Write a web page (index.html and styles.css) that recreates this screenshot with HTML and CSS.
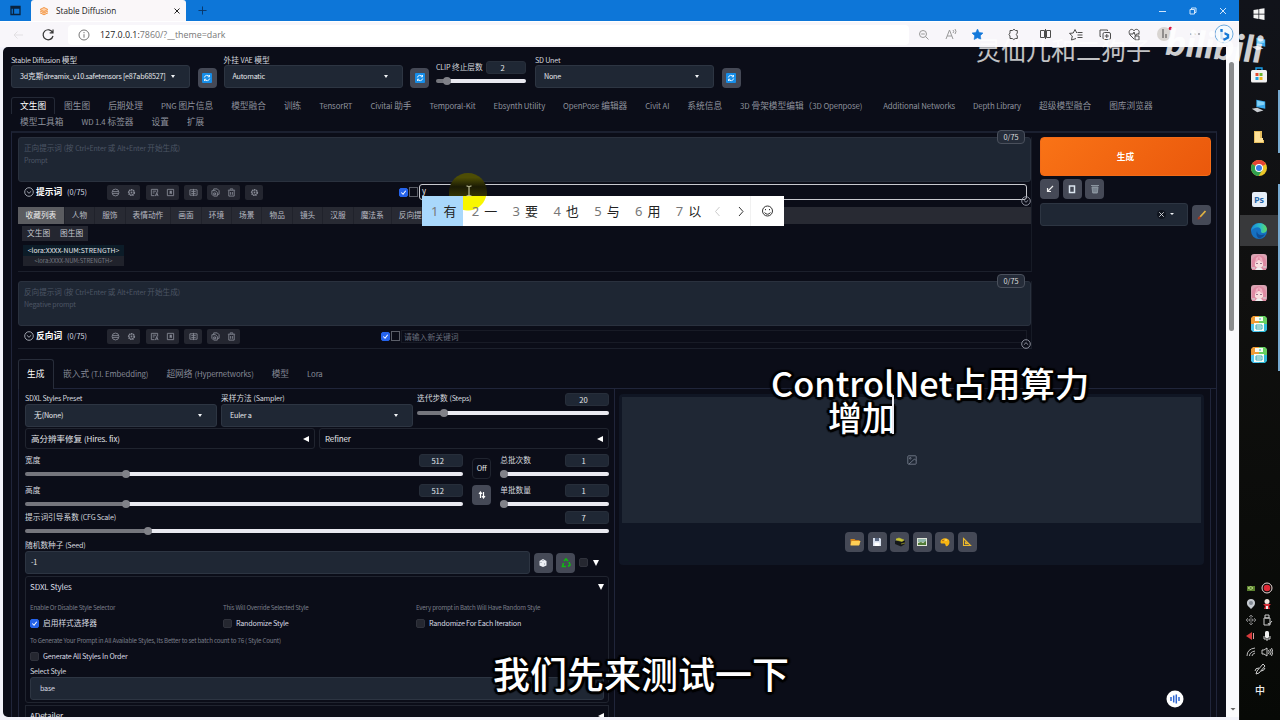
FILE: index.html
```html
<!DOCTYPE html>
<html lang="zh-CN">
<head>
<meta charset="utf-8">
<title>Stable Diffusion</title>
<link rel="stylesheet" href="styles.css">
</head>
<body>
<svg width="0" height="0" class="defs">
  <symbol id="reload" viewBox="0 0 12 12"><rect x="1" y="1" width="10" height="10" rx="1" fill="#168de8"/><path d="M3.3 5.5a2.8 2.8 0 0 1 5-1M8.7 6.5a2.8 2.8 0 0 1-5 1M8.5 3v1.8H6.7M3.5 9V7.2h1.8" fill="none" stroke="#e8f6ff"/></symbol>
  <symbol id="globe" viewBox="0 0 10 10"><g fill="none" stroke="currentColor"><circle cx="5" cy="5" r="3.8"/><path d="M1.5 4h7M1.5 6h7"/></g></symbol>
  <symbol id="gear" viewBox="0 0 10 10"><circle cx="5" cy="5" r="3" fill="none" stroke="currentColor" stroke-width="2" stroke-dasharray="1.6 .6"/><circle cx="5" cy="5" r="1" fill="currentColor"/></symbol>
  <symbol id="doc" viewBox="0 0 10 10"><path d="M5 8.5H1.5v-7h7V5M3 3.5h4M3 5.5h2M6 9l1.5-4L9 9M6.5 7.7h2" fill="none" stroke="currentColor"/></symbol>
  <symbol id="mark" viewBox="0 0 10 10"><path d="M1.5 1.5h7v7h-7z" fill="none" stroke="currentColor"/><path d="M4 3h2.5v4L5.2 6 4 7z" fill="currentColor"/></symbol>
  <symbol id="trans" viewBox="0 0 10 10"><path d="M1 2h8v6H1zM5 1v8M2.5 4h5M2.5 6h5" fill="none" stroke="currentColor"/></symbol>
  <symbol id="copy" viewBox="0 0 10 10"><path d="M3 3V1h4l2 2v4H7M1 3h4l2 2v4H3L1 7zM3 5.5h2v2H3z" fill="none" stroke="currentColor"/></symbol>
  <symbol id="trash" viewBox="0 0 10 10"><path d="M1 2.5h8M3.5 2V1h3v1M2 3v6h6V3M4 4.5v3M6 4.5v3" fill="none" stroke="currentColor"/></symbol>
  <symbol id="circdown" viewBox="0 0 10 10"><g fill="none" stroke="currentColor" stroke-width=".9"><circle cx="5" cy="5" r="4.3"/><path d="M2.8 4.2 5 6.3l2.2-2.1"/></g></symbol>
  <symbol id="pc" viewBox="0 0 18 16"><path d="m6 1 10 2v8L6 9z" fill="#39a8ea"/><path d="m7 2 8 1.7v3L7 8z" fill="#83d2f7"/><path d="m1 11 6-1 7 3-7 2z" fill="#c8ccd0"/></symbol>
  <symbol id="girl" viewBox="0 0 16 16"><rect width="16" height="16" rx="3" fill="#d9a3b2"/><path d="M1 16V8C1-1 15-1 15 8v8z" fill="#df8ba3"/><path d="M4 8q4-4 8 0v4q-4 4-8 0z" fill="#f8dedd"/><path d="M8 2 6 8 4 9 5 4zM8 2l1 5 3 2-1-5z" fill="#eeb0c0"/><path d="M5.200 9.500h1.600M9.200 9.500h1.600" stroke="#7f5a78"/><path d="m4 16 2-2.500h4l2 2.500z" fill="#eef0f0"/><path d="M1 14h3M12 13h3" stroke="#cfe3df"/></symbol>
  <symbol id="disk" viewBox="0 0 16 16"><path d="M0 2 2 0h6v8H0z" fill="#ee9c36"/><path d="M8 0h6l2 2v6H8z" fill="#65cf60"/><path d="M0 8h8v8H2l-2-2z" fill="#4bc5ee"/><path d="M8 8h8v6l-2 2H8z" fill="#2fbad7"/><path d="M4 1h8v4H4zM3 7h10v8H3z" fill="#f6fbf4"/><path d="M9 2v2M5 9h6v4H5zM5 11h5" fill="none" stroke="#3aabb4"/></symbol>
</svg>

<div class="desktop">
  <main class="browser">
    <div class="titlebar">
      <svg class="work" viewBox="0 0 11 11"><path d="M1 1.5h9v8H1zM1 3h9M3.5 3v6" fill="none" stroke="#09233f" stroke-width="1.3"/></svg>
      <div class="btab"><svg viewBox="0 0 10 10"><path d="m1 3.5 4-2 4 2-4 2zM1 5l4 2 4-2M1 6.8l4 2 4-2" fill="#ffd0a8" stroke="#f39a4b"/></svg><span>Stable Diffusion</span><svg class="x" viewBox="0 0 8 8"><path d="m1.5 1.5 5 5m0-5-5 5" stroke="#222"/></svg></div>
      <svg class="plus" viewBox="0 0 10 10"><path d="M5 .5v9M.5 5h9" stroke="#0a3464"/></svg>
      <svg class="winctl" viewBox="0 0 70 12"><g fill="none" stroke="#cfe5fb"><path d="M1 6.5h7M62 3l6 6m0-6-6 6M32 4.5h4.5V9H32zM33.5 4.500V3H38v4.500h-1.500"/></g></svg>
    </div>
    <div class="toolbar">
      <svg class="nav" viewBox="0 0 60 20"><path d="M14 10h9M17.500 6.500 14 10l3.500 3.500" fill="none" stroke="#e2e0e3"/><path d="M52.600 7.500a5 5 0 1 0 .4 3.500M53 4.500v3.300h-3.300" fill="none" stroke="#333" stroke-width="1.200"/></svg>
      <div class="addr">
        <svg viewBox="0 0 12 12"><g fill="none" stroke="#777"><circle cx="6" cy="6" r="5"/><path d="M6 5.200v3.500M6 3v1.200"/></g></svg>
        <span class="url"><b>127.0.0.1:</b>7860/?__theme=dark</span>
      </div>
      <svg class="tools" viewBox="0 0 330 24"><g fill="none" stroke="#4c4c4c">
        <g stroke="#999"><circle cx="14" cy="11" r="3.500"/><path d="m16.500 13.500 3 3M12.200 11h3.600"/><path d="m37 16 3.500-9 3.500 9M38.200 13h4.500M44 7q1.500 1.500 0 3M46 6q2 2.500 0 5"/></g>
        <path d="m68.500 6 1.700 3.500 3.800.5-2.700 2.700.6 3.800-3.400-1.800-3.400 1.800.6-3.800L63 10l3.800-.5z" fill="#1479da" stroke="#1479da" stroke-width=".6"/>
        <path d="M101 7.500h2.500q1.500-2.500 3 0h1.800v2.500q-2 1.500 0 3v2.500h-2q-1.500 2-3 0H101v-2.500q-2-1.500 0-3z"/>
        <path d="M131.500 7.500h4v7h-4zM137.500 7.500h4v7h-4zM136.500 6v10"/>
        <path d="m167 15.500-4.500 1.500.8-4-2.800-2.600 3.700-.4 1.800-3.500 1.800 3.500M168.500 9.500h5M168.500 12h5M168.500 14.500h5"/>
        <rect x="194" y="9.500" width="7.500" height="7" rx="1.500"/><path d="M192 13.500h-1V7h7.500v1M197.800 11v4M195.800 13h4"/>
        <path d="m225 16-4-4c-3-5 2.500-7.500 4-4 1.500-3.500 7-1 4.500 3M221 11h3l1-2 1.500 4 1-2h3M226 13h4v4h-4z"/>
      </g><circle cx="255" cy="11" r="7" fill="#d9d5d2"/><path d="M254 6v9M257 11v4" stroke="#918e8d" stroke-width="2"/><circle cx="261.500" cy="5.500" r="1.800" fill="#d90d28"/><g fill="#555"><circle cx="282" cy="11" r=".8"/><circle cx="286" cy="11" r=".8"/><circle cx="290" cy="11" r=".8"/></g><circle cx="315" cy="11" r="9" fill="#f5fafe" stroke="#6daade"/><path d="M312.500 6v9l3 1.500 3.500-2v-2.500l-4-2" fill="none" stroke="#147ad7" stroke-width="2.400"/></svg>
    </div>
    <div class="viewport">
      <div class="page">
        <div class="quick">
          <div class="field"><label><small>Stable Diffusion</small> 模型</label><div class="select"><span><small>3d</small>克斯<small>dreamix_v10.safetensors [e87ab68527]</small></span><i></i></div></div>
          <div class="sq"><svg><use href="#reload"/></svg></div>
          <div class="field"><label>外挂 <small>VAE</small> 模型</label><div class="select"><small>Automatic</small><i></i></div></div>
          <div class="sq"><svg><use href="#reload"/></svg></div>
          <div class="slider clip"><div class="head"><label><small>CLIP</small> 终止层数</label><b>2</b></div><div class="track" style="--v:13%"></div></div>
          <div class="field"><label><small>SD Unet</small></label><div class="select"><small>None</small><i></i></div></div>
          <div class="sq"><svg><use href="#reload"/></svg></div>
        </div>
        <nav class="tabs">
          <span class="on">文生图</span><span>图生图</span><span>后期处理</span><span><small>PNG</small> 图片信息</span><span>模型融合</span><span>训练</span><span><small>TensorRT</small></span><span><small>Civitai</small> 助手</span><span><small>Temporal-Kit</small></span><span><small>Ebsynth Utility</small></span><span><small>OpenPose</small> 编辑器</span><span><small>Civit AI</small></span><span>系统信息</span><span><small>3D</small> 骨架模型编辑（<small>3D Openpose)</small></span><span class="addn"><small>Additional Networks</small></span><span><small>Depth Library</small></span><span>超级模型融合</span><span>图库浏览器</span>
        </nav>
        <nav class="tabs second"><span>模型工具箱</span><span><small>WD 1.4</small> 标签器</span><span>设置</span><span>扩展</span></nav>
        <section class="panel">
          <div class="top">
            <div class="prompts">
              <div class="pbox">
                <div class="area">正向提示词 <small>(</small>按 <small>Ctrl+Enter</small> 或 <small>Alt+Enter</small> 开始生成<small>)</small><br><small>Prompt</small><em class="count">0/75</em></div>
                <div class="ptools">
                  <svg class="cd"><use href="#circdown"/></svg><strong>提示词</strong><span class="tok">(0/75)</span>
                  <div class="grp"><svg><use href="#globe"/></svg><svg><use href="#gear"/></svg></div>
                  <div class="grp"><svg><use href="#doc"/></svg><svg><use href="#mark"/></svg></div>
                  <div class="grp one"><svg><use href="#trans"/></svg></div>
                  <div class="grp"><svg><use href="#copy"/></svg><svg><use href="#trash"/></svg></div>
                  <div class="grp one"><svg><use href="#gear"/></svg></div>
                  <div class="kw first"><i class="chk on"></i><i class="brk"></i><div class="kin">y</div></div>
                  <svg class="fold"><use href="#circdown"/></svg>
                </div>
                <div class="cats"><span class="on">收藏列表</span><span>人物</span><span>服饰</span><span>表情动作</span><span>画面</span><span>环境</span><span>场景</span><span>物品</span><span>镜头</span><span>汉服</span><span>魔法系</span><span>反向提</span></div>
                <div class="subs"><span>文生图</span><span>图生图</span></div>
                <div class="lora"><div>&lt;lora:XXXX-NUM:STRENGTH&gt;</div><div>&lt;lora:XXXX-NUM:STRENGTH&gt;</div></div>
              </div>
              <div class="pbox neg">
                <div class="area">反向提示词 <small>(</small>按 <small>Ctrl+Enter</small> 或 <small>Alt+Enter</small> 开始生成<small>)</small><br><small>Negative prompt</small><em class="count">0/75</em></div>
                <div class="ptools">
                  <svg class="cd"><use href="#circdown"/></svg><strong>反向词</strong><span class="tok">(0/75)</span>
                  <div class="grp"><svg><use href="#globe"/></svg><svg><use href="#gear"/></svg></div>
                  <div class="grp"><svg><use href="#doc"/></svg><svg><use href="#mark"/></svg></div>
                  <div class="grp one"><svg><use href="#trans"/></svg></div>
                  <div class="grp"><svg><use href="#copy"/></svg><svg><use href="#trash"/></svg></div>
                  <div class="kw"><i class="chk on"></i><i class="brk"></i><div class="kin">请输入新关键词</div></div>
                  <svg class="fold up"><use href="#circdown"/></svg>
                </div>
              </div>
            </div>
            <aside class="gen">
              <button class="go">生成</button>
              <div class="minis">
                <div class="sq"><svg viewBox="0 0 12 12"><path d="M9 3 4 8M3.500 5v3.500H7" fill="none" stroke="#eee" stroke-width="1.200"/></svg></div>
                <div class="sq"><svg viewBox="0 0 12 12"><path d="M3.500 3h5v6.500h-5z" fill="none" stroke="#dbe5ef" stroke-width="1.500"/></svg></div>
                <div class="sq"><svg viewBox="0 0 12 12"><path d="M2 2.500h8M3 4h6l-.7 6H3.700z" fill="#8a949e" stroke="#8a949e"/><path d="M5 5v4M7 5v4" stroke="#69727e"/></svg></div>
              </div>
              <div class="style"><div class="select"><u><svg viewBox="0 0 8 8"><path d="m2 2 4 4m0-4L2 6" stroke="#d7dbe1" stroke-width=".8"/></svg></u><i></i></div><div class="sq"><svg viewBox="0 0 12 12"><path d="m4 8 5.500-6" stroke="#e0b343" stroke-width="1.800"/><path d="M1.500 10.500q0-3 2-3.300l1.500 1Q4 11 1.500 10.500" fill="#a63d23"/></svg></div></div>
            </aside>
          </div>
          <nav class="gtabs"><span class="on">生成</span><span>嵌入式 <small>(T.I. Embedding)</small></span><span>超网络 <small>(Hypernetworks)</small></span><span>模型</span><span><small>Lora</small></span></nav>
          <div class="work2">
            <div class="settings">
              <div class="r1">
                <div class="field"><label><small>SDXL Styles Preset</small></label><div class="select"><span>无<small>(None)</small></span><i></i></div></div>
                <div class="field"><label>采样方法 <small>(Sampler)</small></label><div class="select"><small>Euler a</small><i></i></div></div>
                <div class="slider"><div class="head"><label>迭代步数 <small>(Steps)</small></label><b>20</b></div><div class="track" style="--v:14.500%"></div></div>
              </div>
              <div class="r2"><div><span>高分辨率修复 <small>(Hires. fix)</small></span><i class="tri"></i></div><div><small>Refiner</small><i class="tri"></i></div></div>
              <div class="r3">
                <div class="dims"><div class="slider"><div class="head"><label>宽度</label><b>512</b></div><div class="track" style="--v:23.200%"></div></div>
                <div class="slider"><div class="head"><label>高度</label><b>512</b></div><div class="track" style="--v:23.200%"></div></div></div>
                <div class="btns"><div class="off">Off</div><div class="sq"><svg viewBox="0 0 12 12"><path d="M4.500 9V3.500M3 5l1.500-2L6 5M7.500 3v5.500M6 7l1.500 2L9 7" fill="none" stroke="#fff" stroke-width="1.200"/></svg></div></div>
                <div class="batch"><div class="slider"><div class="head"><label>总批次数</label><b>1</b></div><div class="track" style="--v:4%"></div></div>
                <div class="slider"><div class="head"><label>单批数量</label><b>1</b></div><div class="track" style="--v:4%"></div></div></div>
              </div>
              <div class="slider cfg"><div class="head"><label>提示词引导系数 <small>(CFG Scale)</small></label><b>7</b></div><div class="track" style="--v:21.200%"></div></div>
              <div class="seed"><div class="field"><label>随机数种子 <small>(Seed)</small></label><div class="select"><small>-1</small></div></div>
                <div class="sq"><svg viewBox="0 0 12 12"><path d="m6 2 3.500 2v4.500L6 10 2.500 8.500V4z" fill="#eceef3"/><path d="M4 5v1M7.500 6.500v1M6 3v1" stroke="#8b929f"/></svg></div>
                <div class="sq"><svg viewBox="0 0 12 12"><path d="m4 4 2-2 2 2M9 5l1 3-2 1.500M6 9.500H2.500L3.500 6" fill="none" stroke="#13b515" stroke-width="1.700"/></svg></div>
                <i class="chk"></i><i class="tri down"></i></div>
              <div class="acc">
                <div class="acch"><small>SDXL Styles</small><i class="tri down"></i></div>
                <div class="three"><div><p>Enable Or Disable Style Selector</p><span><i class="chk on"></i>启用样式选择器</span></div><div><p>This Will Override Selected Style</p><span><i class="chk"></i><small>Randomize Style</small></span></div><div><p>Every prompt in Batch Will Have Random Style</p><span><i class="chk"></i><small>Randomize For Each Iteration</small></span></div></div>
                <div class="allst"><p>To Generate Your Prompt in All Available Styles, Its Better to set batch count to 76 ( Style Count)</p><span><i class="chk"></i><small>Generate All Styles In Order</small></span></div>
                <label><small>Select Style</small></label><div class="select"><small>base</small></div>
              </div>
              <div class="acc2"><div class="acch"><small>ADetailer</small><i class="tri"></i></div></div>
            </div>
            <div class="result">
              <div class="output">
                <div class="canvas"><svg viewBox="0 0 10 10"><g fill="none" stroke="#7d8796" stroke-width=".8"><rect x=".8" y=".8" width="8.400" height="8.400" rx=".8"/><circle cx="3.300" cy="3.300" r=".8"/><path d="m2 9 5.500-5L9 5.500"/></g></svg></div>
                <div class="acts">
                  <div class="sq"><svg viewBox="0 0 12 12"><path d="M1.500 3h4l1 1h4v5h-9z" fill="#d4861c"/><path d="M2.500 5h9L10 9.500H1.500z" fill="#ffcf55"/></svg></div>
                  <div class="sq"><svg viewBox="0 0 12 12"><path d="M2 2h7l1 1v7H2z" fill="#d9e1ef"/><path d="M4 2h4v3H4z" fill="#5c6a84"/><path d="M3.500 6.500h5V10h-5z" fill="#fff"/></svg></div>
                  <div class="sq"><svg viewBox="0 0 12 12"><path d="m1 5 6-2 4 2v3L7 10.500 1 8z" fill="#15181a"/><path d="m2 3 3-1 5 2-2 1.500-6-1.500M7 8l4-1" fill="#cac632" stroke="#bebc38" stroke-width=".6"/></svg></div>
                  <div class="sq"><svg viewBox="0 0 12 12"><path d="M1 2h10v8H1z" fill="#e0e6da"/><path d="M2 3h8v3H2z" fill="#91b6aa"/><path d="M2 9V7l3-1 2 1 3-2v4z" fill="#507a36"/></svg></div>
                  <div class="sq"><svg viewBox="0 0 12 12"><path d="M1.500 6c0-5 9-5 9 0 0 2-1.500 4.500-3 4.200C6 10 7 7.500 5 7.500S1.500 8 1.500 6" fill="#f7b512"/><circle cx="4" cy="4.500" r=".8" fill="#a85d19"/><circle cx="7" cy="4" r=".8" fill="#fff0a0"/></svg></div>
                  <div class="sq"><svg viewBox="0 0 12 12"><path d="m2.500 2.500 7 7h-7zM4.500 6.500v1.300h1.500z" fill="none" stroke="#edba2c" stroke-width="1.100"/></svg></div>
                </div>
              </div>
            </div>
          </div>
        </section>
      </div>
      <div class="scroll"><div class="thumb"></div><svg viewBox="0 0 8 8"><path d="M1.500 3h5L4 5.500z" fill="#666"/></svg></div>
    </div>
  </main>
  <aside class="taskbar">
    <div class="app"><svg viewBox="0 0 16 16"><path d="m2.500 4 5-.8v4.500h-5zM8.200 3l5.300-.8v5.500H8.200zM2.500 8.400h5v4.500l-5-.8zM8.200 8.400h5.300v5.500L8.200 13z" fill="#f4f4f4"/></svg></div>
    <div class="app"><svg><use href="#pc"/></svg></div>
    <div class="app"><svg viewBox="0 0 16 16"><path d="M5 4V1h6v3" fill="none" stroke="#199fe9" stroke-width="1.400"/><rect y="3" width="16" height="12.500" rx="1.500" fill="#f2f2f2"/><path d="M4.500 6h3v3h-3z" fill="#e3492c"/><path d="M8.500 6h3v3h-3z" fill="#6bb52e"/><path d="M4.500 10h3v3h-3z" fill="#219fd9"/><path d="M8.500 10h3v3h-3z" fill="#f0b61c"/></svg></div>
    <div class="app run"><svg><use href="#pc"/></svg></div>
    <div class="app run"><svg viewBox="0 0 16 16"><path d="M3 2h8v9h2v3H3z" fill="#e6be5e"/><path d="M4 3h5v10H4zM9 9h3v4H9z" fill="#ffe298"/></svg></div>
    <div class="app"><svg viewBox="0 0 16 16"><circle cx="8" cy="8" r="8" fill="#ebc528"/><path d="M8 8 1.100 4A8 8 0 0 1 15 4z" fill="#e54335"/><path d="M8 8 1.100 4A8 8 0 0 0 7.500 16l4-6z" fill="#30a04e"/><circle cx="8" cy="8" r="4" fill="#fff"/><circle cx="8" cy="8" r="3" fill="#397bea"/></svg></div>
    <div class="app run"><div class="ps">Ps</div></div>
    <div class="app run cur"><svg viewBox="0 0 16 16"><defs><linearGradient id="eg" x2="1"><stop stop-color="#1687dc"/><stop offset=".6" stop-color="#2fc0c0"/><stop offset="1" stop-color="#60db60"/></linearGradient></defs><circle cx="8" cy="8" r="8" fill="#1671c2"/><path d="M0 8C1-2 15-2 16 6c0 5-7 5-6 2 0-5-6-5-10 0" fill="url(#eg)"/><path d="M6 8c0 4 4 5 8 3-1 2-3 4-6 4.500Q4 13 6 8" fill="#114d93"/></svg></div>
    <div class="app run"><svg><use href="#girl"/></svg></div>
    <div class="app run"><svg><use href="#girl"/></svg></div>
    <div class="app run"><svg><use href="#disk"/></svg></div>
    <div class="app run"><svg><use href="#disk"/></svg></div>
    <div class="tray">
      <svg viewBox="0 0 12 12"><path d="M2 4h8v5H2z" fill="#5a812e"/><path d="M3 6q3-3 5 0-2 3-5 0" fill="none" stroke="#b5d680"/></svg>
      <svg viewBox="0 0 12 12"><circle cx="6" cy="6" r="5" fill="none" stroke="#ecd8d8"/><circle cx="6" cy="6" r="3.300" fill="#e02936"/></svg>
      <svg viewBox="0 0 12 12"><path d="M6 1c5 0 5 6 2 8l-2 2-2-2C1 7 1 1 6 1" fill="#c6cbd0"/><circle cx="6" cy="5" r="2" fill="#858c95"/></svg>
      <svg viewBox="0 0 12 12"><circle cx="6" cy="3.500" r="2.500" fill="#f2e7df"/><path d="M2 6h8L8 8l1 3H3l1-3z" fill="#d92d37"/><path d="M5 8h2v3H5z" fill="#eee"/></svg>
      <svg viewBox="0 0 12 12"><path d="M6 1v3M6 8v3M1 6h3M8 6h3M4 3l2-2 2 2M4 9l2 2 2-2M3 4 1 6l2 2M9 4l2 2-2 2M4.500 5h3v2h-3z" fill="none" stroke="#777"/></svg>
      <svg viewBox="0 0 12 12"><path d="M4 1h4v3H4zM3 4h6v7H3z" fill="none" stroke="#ccc"/><path d="m7 9 1 1.500L11 7" fill="none" stroke="#ccc"/></svg>
      <svg viewBox="0 0 12 12"><path d="m1 6 6-4v8z" fill="#d73b3c"/><path d="M8.500 3v6" stroke="#d8a0a0"/></svg>
      <svg viewBox="0 0 12 12"><rect x="4" y="1" width="4" height="7" rx="1.500" fill="#eee"/><path d="M3 6v3h6V6M6 9v2" fill="none" stroke="#ccc"/></svg>
      <svg viewBox="0 0 12 12"><path d="M2 10Q2 3 10 2M4.500 10q0-4 5.500-5M7 10q0-2 3-3" fill="none" stroke="#bbb"/></svg>
      <svg viewBox="0 0 12 12"><path d="M1 4h2l3-2v8L3 8H1zM7.500 4q1.500 2 0 4M9 3q2.500 3 0 6M10.500 2q3 4 0 8" fill="none" stroke="#ddd" stroke-width=".9"/></svg>
    </div>
    <svg class="pen" viewBox="0 0 12 12"><path d="m3 8 6-7 2 2-6 7-3 1zM1 8q0-3 4-3M7 8q3 0 4-3" fill="none" stroke="#ccc"/></svg>
    <div class="ime">中</div>
  </aside>
</div>

<div class="halo"></div>
<div class="cand"><span class="sel"><b>1</b>有</span><span><b>2</b>一</span><span><b>3</b>要</span><span><b>4</b>也</span><span><b>5</b>与</span><span><b>6</b>用</span><span><b>7</b>以</span><svg viewBox="0 0 98 30"><g fill="none" stroke="#333"><path d="m15.500 11-4 4.500 4 4.500" stroke="#ccc"/><path d="m35 11 4 4.500-4 4.500"/><path d="M46.500 0v30" stroke="#f1f1f1"/><circle cx="63.500" cy="15" r="5"/><path d="M60.500 16.500q3 3.500 6 0M61.500 13v1.200M65.500 13v1.200"/></g></svg></div>
<svg class="ibeam" viewBox="0 0 8 12"><path d="M1.500 1q2.500 0 2.500 1 0-1 2.500-1M4 2v8M1.500 11Q4 11 4 10q0 1 2.500 1" fill="none" stroke="#d8d8b0"/></svg>
<div class="wm">灵仙儿和二狗子</div>
<div class="wmlogo">bilibili</div>
<div class="cap c1">ControlNet占用算力</div>
<div class="cap c2">增加</div>
<div class="beam"></div>
<div class="cap c3">我们先来测试一下</div>
<svg class="voice" viewBox="0 0 18 18"><circle cx="9" cy="9" r="8.500" fill="#fff"/><path d="M5 7v4M7.700 5.500v7M10.300 4.500v9M13 7v4" stroke="#2c64d0" stroke-width="1.500"/></svg>
</body>
</html>
```
FILE: styles.css
```css
*{box-sizing:border-box}
body{margin:0;width:1280px;height:720px;overflow:hidden;position:relative;background:#f2f2f8;color:#e5e7eb;font:8.700px/12px "Noto Sans CJK SC",sans-serif}
svg{display:block;flex:none}
i,em{font-style:normal}
p{margin:0}
small{font-size:7.200px;letter-spacing:-.230px}
.defs{position:absolute}
.desktop{display:flex;height:720px}
.browser{width:1239px;flex:none;background:#f2f2fa;display:flex;flex-direction:column}
.titlebar{height:21px;flex:none;background:#0d76d8;display:flex;align-items:center}
.work{width:11px;height:11px;margin:0 15px 0 10px}
.btab{width:155px;height:21px;background:#faf7f9;border-radius:3px 3px 0 0;display:flex;align-items:center;color:#222;font:8.200px/20px "Open Sans",sans-serif;padding:0 5px 0 8px;margin-left:-5px}
.btab svg{width:10px;height:10px;margin-right:7px}
.btab .x{width:8px;height:8px;margin:0 0 0 auto}
.plus{width:9px;height:9px;margin-left:12px}
.winctl{width:70px;height:12px;margin-left:auto;margin-right:11px}
.toolbar{height:26px;flex:none;display:flex;align-items:center;background:#f8f6fa;border-top:1px solid #fff}
.nav{width:60px;height:20px;margin-right:8px}
.addr{height:20px;flex:1;background:#fff;border-radius:4px;display:flex;align-items:center;padding-left:10px;color:#777;font:8.900px/20px "Open Sans",sans-serif}
.addr svg{width:12px;height:12px;margin-right:10px}
.addr b{font-weight:400;color:#222}
.tools{width:330px;height:24px}
.viewport{height:670px;display:flex;padding-left:3px}
.page{width:1223px;height:670px;overflow:hidden;background:#0b0d18;border-radius:5px 0 0 5px;padding-left:8px}
.scroll{width:13px;background:#fafafd;display:flex;flex-direction:column;align-items:center}
.thumb{width:5px;height:269px;margin:15px 2px 0 0;background:#8b8c8e;border-radius:3px}
.scroll svg{width:8px;height:8px;margin-top:auto;margin-bottom:4px}

.quick{height:41px;display:flex;align-items:flex-start;padding-top:7px}
.field label,.slider label,.acc label{display:block;font-size:7.700px;line-height:12px;height:12px;color:#d5d8df;white-space:nowrap}
.select{height:23px;background:#1f2734;border:1px solid #2d3542;border-radius:3px;display:flex;align-items:center;padding:0 14px 1px 8px;font-size:7.700px;white-space:nowrap}
.select i{width:0;height:0;border:2.500px solid transparent;border-top:3px solid #f2f4f7;border-bottom:0;margin-left:auto}
.quick .field{width:179px}
.quick .select{margin-top:-1px}
.sq{width:19px;height:20px;flex:none;border-radius:4px;background:#454956;display:flex;align-items:center;justify-content:center}
.sq svg{width:12px;height:12px}
.quick .sq{margin:14px 7px 0 7.500px}
.quick .clip+.field{margin-left:9px}
.head{display:flex;justify-content:space-between}
.head b{width:44px;height:13px;background:#1f2734;border:1px solid #272e3a;border-radius:3px;text-align:center;font-weight:400;font-size:7.600px;line-height:11px;padding-right:7px}
.track{height:4px;border-radius:2px;background:linear-gradient(90deg,#75767d var(--v),#e9e9f0 var(--v));position:relative;margin-top:4px}
.track::after{content:"";position:absolute;width:8px;height:8px;border-radius:4px;background:#808188;top:-2px;left:calc(var(--v) - 5px)}
.quick .clip{width:90px;padding-top:7px}
.clip .head b{width:40px}
.clip .head{height:14px}

.tabs{display:flex;height:25px;padding:9px 0 0 0;font-size:8.700px;line-height:17px;color:#8e929d;white-space:nowrap}
.tabs span{padding:0 9px;height:17px}
.tabs small,.gtabs small{font-size:7.800px;letter-spacing:-.120px}
.tabs .on{color:#fff;border:1px solid #242936;border-bottom:0;border-radius:3px 3px 0 0;padding:0 8px;line-height:16px}
.tabs .addn{margin-left:3px}
.tabs.second{height:18px;padding-top:0}
.panel{width:1206px;height:600px;border:1px solid #20253a;border-top:2px solid #1b2030;padding-left:6px}
.top{display:flex;height:222px}
.prompts{width:1014px;padding-top:4px}
.area{height:45px;background:#1e2633;border:1px solid #2a313e;border-radius:3px;color:#4c5564;font-size:7.600px;line-height:11px;padding:4px 5px;position:relative}
.area small{font-size:7px;letter-spacing:-.200px}
.count{position:absolute;right:5px;top:-8px;width:28px;height:14px;background:#252c39;border:1px solid #4a505c;border-radius:4px;color:#ddd;text-align:center;font-size:7.300px;line-height:12px}
.pbox{height:135px;border-right:1px solid #171b26;border-bottom:1px solid #1c202c}
.neg{margin-top:9px;height:68px}
.ptools{height:20px;display:flex;align-items:center;padding-left:6px;position:relative}
.cd{width:10px;height:10px;color:#aeb2bc}
.ptools strong{width:27px;margin-left:2px;font-size:8.700px;color:#fff}
.tok{width:38px;font-size:7.300px;margin-left:4px;color:#d8dbe2}
.grp{width:33px;height:15px;margin-left:2px;margin-right:4px;background:#242630;border-radius:2px;display:flex;align-items:center;justify-content:space-around;color:#858893}
.grp.one{width:18px;margin-left:1px;margin-right:3px}
.grp svg{width:9px;height:9px}
.kw{display:flex;align-items:center;margin-left:auto;width:646px;margin-right:4px}
.kw.first{width:628px}
.chk{width:9px;height:9px;background:#252730;border:1px solid #30323c;border-radius:2px;display:block;flex:none}
.chk.on{background:#2563eb url("data:image/svg+xml,%3Csvg xmlns='http://www.w3.org/2000/svg' viewBox='0 0 8 8'%3E%3Cpath d='M1.500 4l2 2 3-4' fill='none' stroke='white' stroke-width='1.200'/%3E%3C/svg%3E");border-color:#2563eb}
.brk{width:9px;height:10px;border:1px solid #5b5e68;margin-left:1px}
.kin{flex:1;height:13px;border:1px solid #181b26;color:#666b78;font-size:7.800px;line-height:11px;padding-left:2px;margin-left:1px}
.first .kin{height:16px;border:1.500px solid #c8c9cf;border-radius:3px;color:#eee}
.fold{position:absolute;width:10px;height:10px;right:0;bottom:-4px;color:#9a9daa}
.fold.up{transform:rotate(180deg);bottom:-3px}
.cats{height:17px;margin-top:5px;background:#282a33;display:flex;font-size:7.700px;line-height:16px;color:#b9bbc3;white-space:nowrap}
.cats span{padding:0 7px;border-right:1px solid #20222b}
.cats .on{background:#5b5c60;color:#eee;padding:0 7.500px}
.subs{display:flex;margin:2px 0 0 4px;height:15px;width:66px;background:#242630;font-size:7.700px;line-height:14px;color:#c3c5cc;white-space:nowrap}
.subs span{padding:0 5px}
.lora{width:101px;margin:4px 0 0 5px;text-align:center;font-size:6.800px;white-space:nowrap}
.lora div{height:11px;line-height:11px;background:#0c1c28}
.lora div+div{height:10px;line-height:10px;background:#20222b;font-size:5.800px;color:#777b84}
.gen{width:171px;margin-left:8px;padding-top:4px}
.go{display:block;width:171px;height:39px;border:1px solid #f36b17;border-radius:4px;background:linear-gradient(135deg,#f97316,#ea580c);color:#fff;font:bold 8.700px/12px "Noto Sans CJK SC",sans-serif;padding:0}
.minis{display:flex;gap:3.500px;margin-top:3px}
.style{display:flex;justify-content:space-between;margin-top:4px}
.style .select{width:148px}
.style .select u{margin-left:auto;background:#10151f;border-radius:5px;width:9px;height:9px}
.style u svg{width:9px;height:9px}
.style .select i{margin-left:4px;border-width:2px;border-top-width:2.500px}
.style .select{padding-right:13px}
.style .sq{margin-top:2px}

.gtabs{display:flex;height:34px;padding-top:4px;font-size:8.700px;line-height:29px;color:#858995;border-bottom:1px solid #20253a;white-space:nowrap}
.gtabs span{padding:0 9px}
.gtabs .on{color:#fff;height:30px;width:36px;padding:0 8px;line-height:27px;background:#0b0d18;border:1px solid #282d3a;border-bottom:0;border-radius:3px 3px 0 0}
.work2{display:flex;width:1193px;border:1px solid #20253a;border-top:0;height:400px;padding-left:6px}
.settings{width:584px;padding-top:3px;flex:none}
.r1{display:flex;gap:4px;height:36px}
.r1>div{width:192px}
.r1 .head,.dims .head,.batch .head,.cfg .head{height:14px}
.r1 .slider{padding-top:1px}
.r1 .slider label{margin-top:-1px}
.r2{display:flex;gap:4px;height:21px}
.r2>div{width:290px;height:21px;border:1px solid #20242f;border-radius:3px;padding:0 5px;line-height:19px;font-size:8.500px;display:flex;justify-content:space-between;align-items:center}
.r2 small,.acch small{font-size:8px;letter-spacing:-.120px}
.tri{width:0;height:0;border:3px solid transparent;border-right:6px solid #fff;border-left:0}
.tri.down{border:3.300px solid transparent;border-top:6px solid #fff;border-bottom:0}
.r3{display:flex;height:61px;padding-top:5px}
.dims{width:439px}
.dims .slider,.batch .slider{height:30px}
.btns{width:19px;margin:4px 9px 0}
.off{height:21px;border:1px solid #20242f;border-radius:4px;text-align:center;font-size:7.300px;line-height:19px;margin-bottom:6px}
.batch{width:109px}
.cfg{height:29px;padding-top:1px}
.seed{display:flex;height:37px;align-items:flex-start}
.seed .field{width:505px}
.seed .select{padding-left:5px}
.seed .sq{margin:14px 0 0 3.500px}
.seed .chk{margin:19px 5px 0 4px}
.seed .tri{margin:21px 0 0 0}
.acc{height:127px;border:1px solid #20242f;border-radius:3px;padding:0 4px;color:#d8dbe2}
.acch{display:flex;justify-content:space-between;align-items:center;height:19px;font-size:8.500px}
.three{display:flex;height:36px;padding-top:6px}
.three>div{width:193px;flex:none}
.acc p{font-size:6.200px;letter-spacing:-.210px;line-height:12px;color:#7a7d88;white-space:nowrap}
.acc span{display:flex;align-items:center;gap:4px;height:18px;font-size:7.700px;white-space:nowrap}
.allst{height:33px;padding-top:3px}
.acc .select{height:23px;padding-left:9px}
.acc2{height:30px;border:1px solid #20242f;margin-top:2px;padding:0 4px}
.result{flex:1;margin-left:5px;border-left:1px solid #20253a;padding:5px 0 0 4px}
.output{width:585px;height:171px;background:#101624;border-radius:4px;padding:3px 2px 3px 3px}
.canvas{width:579px;height:126px;background:#1f2734;display:flex;align-items:center;justify-content:center}
.canvas svg{width:10px;height:10px}
.acts{display:flex;justify-content:center;gap:3.500px;padding:9px 2px 0 0}

.taskbar{width:41px;background:linear-gradient(#11131a,#10100f 40%,#070906);border-left:1px solid #191919;display:flex;flex-direction:column;align-items:center}
.app{height:31.200px;width:40px;flex:none;display:flex;align-items:center;justify-content:center;border-right:2px solid transparent}
.app svg{width:16px;height:16px}
.app:first-child{height:28px}
.run{border-right-color:#76a9cf}
.cur{background:#38393b}
.ps{width:15px;height:15px;background:#e6eef8;border-radius:2px;color:#2766a8;font:bold 9px/15px "Open Sans",sans-serif;text-align:center}
.tray{display:grid;grid-template-columns:12px 12px;gap:4px 4px;margin:auto 3px 5px 0}
.tray svg,.pen{width:12px;height:12px}
.ime{font-size:10px;line-height:16px;font-weight:500;margin:7px 0 22px;color:#eee}

.halo{position:absolute;left:449px;top:173px;width:38px;height:23px;border-radius:19px 19px 0 0;background:linear-gradient(#4d4d05 20%,#1b1b04 60%,#343303)}
.cand{position:absolute;left:422px;top:196px;width:362px;height:30px;background:#fff;display:flex;color:#222;font-size:13px;line-height:29px}
.cand span{width:40.800px;flex:none;padding-left:9px;white-space:nowrap}
.cand b{font:13px/29px "Noto Sans",sans-serif;color:#777;margin-right:5px}
.cand .sel{background:#a9d8fc}
.cand span:nth-child(2){background:radial-gradient(circle 19px at 5px -4px,#f8f600 18px,transparent 19px)}
.cand svg{width:98px;height:30px;margin-left:-4px}
.ibeam{position:absolute;left:465px;top:185px;width:8px;height:12px}
.wm{position:absolute;left:976px;top:31px;width:190px;height:36px;font-size:25px;line-height:36px;white-space:nowrap;color:#fff;opacity:.75}
.wmlogo{position:absolute;left:1166px;top:24px;font:italic 900 37px/42px Lato,sans-serif;letter-spacing:.200px;color:#fff;opacity:.8;transform:rotate(5deg)}
.cap{position:absolute;color:#fff;font-weight:500;white-space:nowrap;text-shadow:-2px -2px 1px #000,2px -2px 1px #000,-2px 2px 1px #000,2px 2px 1px #000,0 3px 1px #000,3px 0 1px #000,-3px 0 1px #000}
.c1{left:771px;top:362px;font-size:34.300px;line-height:40px}
.c2{left:828px;top:397px;font-size:34px;line-height:40px}
.beam{position:absolute;left:892px;top:395px;width:2px;height:39px;background:#e8e8ee}
.c3{left:493px;top:651px;font-size:37px;line-height:44px}
.voice{position:absolute;left:1166px;top:690px;width:18px;height:18px}
```
